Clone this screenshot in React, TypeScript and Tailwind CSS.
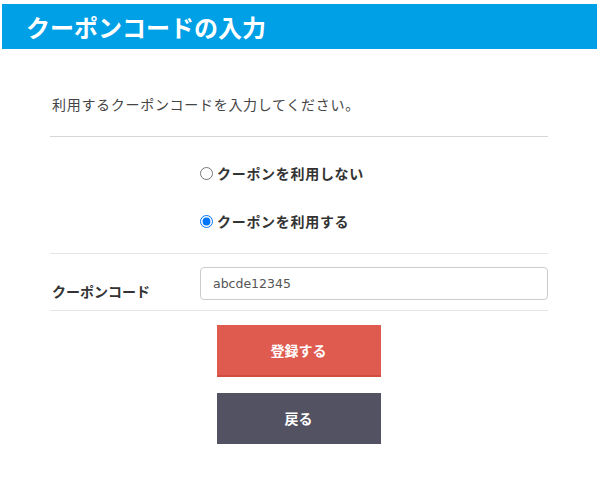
const jp = { fontFamily: '"Noto Sans CJK JP", "Noto Sans", sans-serif' };

export default function App() {
  return (
    <div className="w-[600px] h-[478px] bg-white pt-[4px] pl-[2px] pr-[3px]" style={jp}>
      <div className="h-[45px] bg-[#00a0e6] flex items-center pl-[24px]">
        <h1 className="text-white font-bold text-[24px] leading-none">クーポンコードの入力</h1>
      </div>

      <div className="ml-[48px] w-[498px]">
        <p className="pt-[45px] pb-[22px] pl-[2px] text-[14px] leading-[20px] tracking-[0.05em] text-[#444]">
          利用するクーポンコードを入力してください。
        </p>
        <div className="border-t border-[#d6d6d6]" />

        <div className="pl-[150px] pt-[26px] pb-[22px] flex flex-col gap-[28px] border-b border-[#e6e6e6]">
          <label className="flex items-center gap-[4px] h-[20px] text-[14px] font-bold tracking-[0.05em] text-[#333]">
            <input type="radio" name="coupon" className="m-0 w-[13px] h-[13px]" readOnly />
            クーポンを利用しない
          </label>
          <label className="flex items-center gap-[4px] h-[20px] text-[14px] font-bold tracking-[0.05em] text-[#333]">
            <input type="radio" name="coupon" className="m-0 w-[13px] h-[13px]" defaultChecked />
            クーポンを利用する
          </label>
        </div>

        <div className="flex items-end pt-[13px] pb-[10px] border-b border-[#e6e6e6]">
          <div className="w-[150px] pl-[2px] text-[14px] leading-[20px] font-bold text-[#333] mb-[-1px]">
            クーポンコード
          </div>
          <input
            type="text"
            defaultValue="abcde12345"
            className="flex-1 h-[33px] rounded-[4px] border border-[#cccccc] pl-[12px] text-[#555] outline-none"
            style={{ fontFamily: '"DejaVu Sans", sans-serif', fontSize: "12.5px" }}
          />
        </div>
      </div>

      <div className="flex flex-col items-center gap-[16px] mt-[14px] pr-[2px]">
        <button className="w-[164px] h-[52px] bg-[#df5b4f] border-b-2 border-[#d24c40] text-white text-[14px] font-bold">
          登録する
        </button>
        <button className="w-[164px] h-[51px] bg-[#535262] text-white text-[14px] font-bold">
          戻る
        </button>
      </div>
    </div>
  );
}
